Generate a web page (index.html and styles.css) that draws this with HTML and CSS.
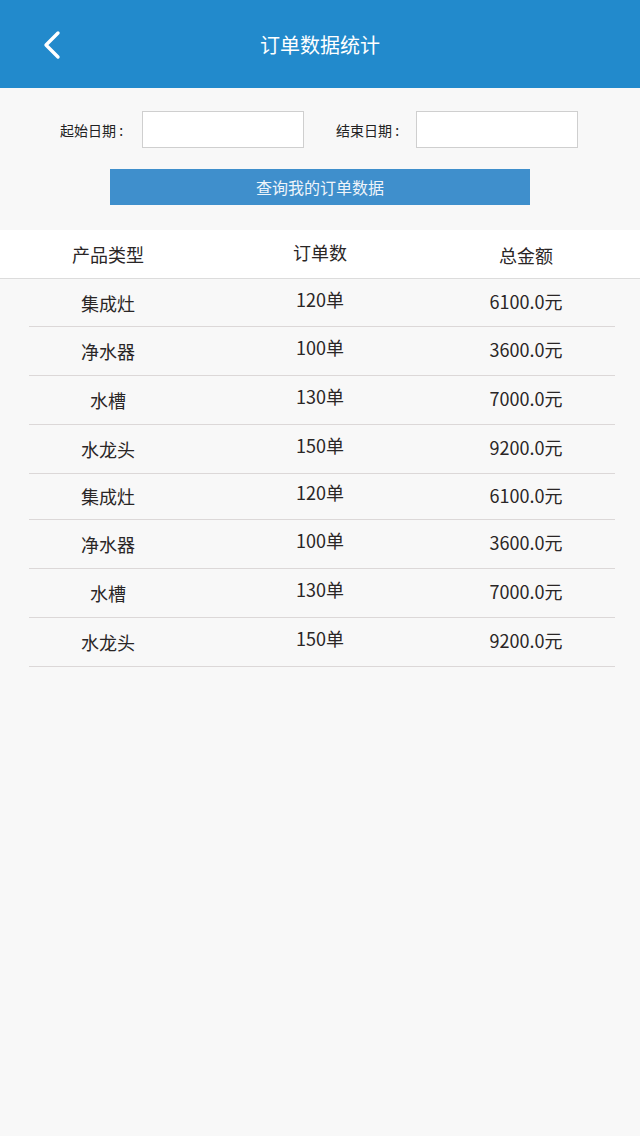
FILE: index.html
```html
<!DOCTYPE html>
<html lang="zh-CN">
<head>
<meta charset="utf-8">
<title>订单数据统计</title>
<link rel="stylesheet" href="styles.css">
</head>
<body>
<header class="topbar">
  <a class="back" href="#" aria-label="返回">
    <svg width="24" height="30" viewBox="0 0 24 30"><path d="M17 3 L5 15 L17 27" fill="none" stroke="#fff" stroke-width="3.4" stroke-linecap="round" stroke-linejoin="round"/></svg>
  </a>
  <h1 class="title">订单数据统计</h1>
</header>

<section class="filter">
  <div class="filter-row">
    <label class="f-label">起始日期 :</label>
    <input class="f-input" type="text">
    <label class="f-label f-label-2">结束日期 :</label>
    <input class="f-input" type="text">
  </div>
  <button class="query-btn" type="button">查询我的订单数据</button>
</section>

<section class="table">
  <div class="thead">
    <div class="cell c1 h1c">产品类型</div>
    <div class="cell c2 h2c">订单数</div>
    <div class="cell c3 h3c">总金额</div>
  </div>
  <div class="tbody">
    <div class="row"><div class="cell c1">集成灶</div><div class="cell c2">120单</div><div class="cell c3">6100.0元</div></div>
    <div class="row"><div class="cell c1">净水器</div><div class="cell c2">100单</div><div class="cell c3">3600.0元</div></div>
    <div class="row"><div class="cell c1">水槽</div><div class="cell c2">130单</div><div class="cell c3">7000.0元</div></div>
    <div class="row"><div class="cell c1">水龙头</div><div class="cell c2">150单</div><div class="cell c3">9200.0元</div></div>
    <div class="row row-short"><div class="cell c1">集成灶</div><div class="cell c2">120单</div><div class="cell c3">6100.0元</div></div>
    <div class="row"><div class="cell c1">净水器</div><div class="cell c2">100单</div><div class="cell c3">3600.0元</div></div>
    <div class="row"><div class="cell c1">水槽</div><div class="cell c2">130单</div><div class="cell c3">7000.0元</div></div>
    <div class="row"><div class="cell c1">水龙头</div><div class="cell c2">150单</div><div class="cell c3">9200.0元</div></div>
  </div>
</section>
</body>
</html>
```

FILE: styles.css
```css
* { box-sizing: border-box; }
html, body {
  margin: 0;
  padding: 0;
  background: #f8f8f8;
  font-family: "Noto Sans CJK SC", "Noto Sans", sans-serif;
  color: #222;
}
body { min-height: 1136px; }

.topbar {
  height: 88px;
  background: #228acc;
  display: flex;
  align-items: center;
  justify-content: center;
  position: relative;
}
.back {
  position: absolute;
  left: 41px;
  top: 30px;
  display: block;
  width: 24px;
  height: 30px;
}
.back svg { display: block; }
.title {
  margin: 0;
  font-size: 20px;
  font-weight: 400;
  color: #fff;
  line-height: 1;
  padding-top: 2px;
}

.filter {
  padding: 23px 0 25px;
  display: flex;
  flex-direction: column;
  align-items: center;
}
.filter-row {
  display: flex;
  align-items: center;
  width: 640px;
  padding-left: 60px;
}
.f-label {
  width: 82px;
  font-size: 14px;
  color: #222;
  white-space: nowrap;
  line-height: 20px;
}
.f-label-2 {
  margin-left: 32px;
  width: 80px;
}
.f-input {
  width: 162px;
  height: 37px;
  border: 1px solid #cfcfcf;
  background: #fff;
  margin: 0;
  padding: 0 6px;
  outline: none;
}
.query-btn {
  margin-top: 21px;
  width: 420px;
  height: 36px;
  border: 0;
  background: #3f8fcc;
  color: #eef4fa;
  font-family: "Noto Sans CJK SC", "Noto Sans", sans-serif;
  font-size: 16px;
  padding: 0;
  line-height: 35px;
}

.thead {
  background: #fff;
  height: 49px;
  border-bottom: 1px solid #dcdcdc;
  display: grid;
  grid-template-columns: 158px 266px 146px;
  padding: 0 25px 0 29px;
}
.tbody {
  margin: 0 25px 0 29px;
}
.row {
  display: grid;
  grid-template-columns: 158px 266px 146px;
  height: 49px;
  border-bottom: 1px solid #dcd8d8;
}
.row:first-child { height: 48px; }
.row-short { height: 46px; }

.cell {
  text-align: center;
  font-size: 18px;
  line-height: 24px;
  color: #2a2626;
  white-space: nowrap;
}
.row .c1 { padding-top: 12px; }
.row .c2 { padding-top: 8px; }
.row .c3 { padding-top: 10px; }
.row-short .c1 { padding-top: 10px; }
.row-short .c2 { padding-top: 6px; }
.row-short .c3 { padding-top: 9px; }

.h1c { padding-top: 12px; }
.h2c { padding-top: 10px; }
.h3c { padding-top: 13px; }
```
